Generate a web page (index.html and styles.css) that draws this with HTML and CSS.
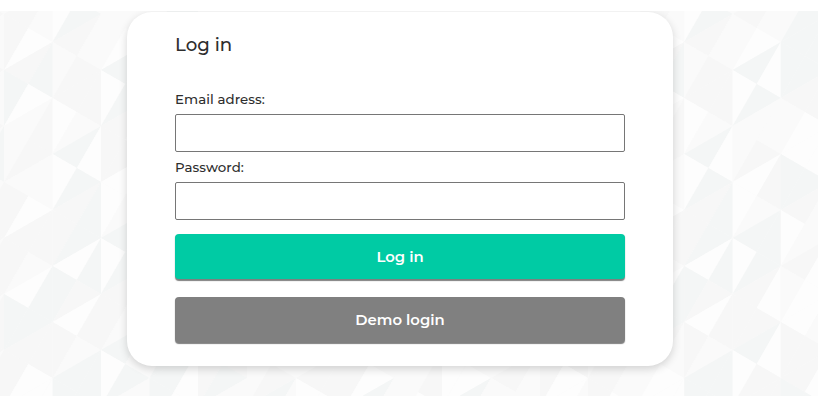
FILE: index.html
```html
<!DOCTYPE html>
<html lang="en">
<head>
<meta charset="utf-8">
<title>Log in</title>
<link rel="stylesheet" href="styles.css">
</head>
<body>
<main class="page">
  <svg class="pattern" id="pattern" width="818" height="385" viewBox="0 11 818 385" aria-hidden="true"></svg>
  <form class="card">
    <h3 class="title">Log in</h3>
    <label class="label" for="email">Email adress:</label>
    <input class="field" id="email" type="email">
    <label class="label" for="password">Password:</label>
    <input class="field" id="password" type="password">
    <button class="button primary" type="button">Log in</button>
    <button class="button demo" type="button">Demo login</button>
  </form>
</main>
<script src="pattern.js"></script>
</body>
</html>
```
FILE: styles.css
```css
* { box-sizing: border-box; }
body {
  margin: 0;
  background: #fff;
  color: #2e2e2e;
  font-family: Montserrat, Inter, sans-serif;
  font-weight: 500;
}
.page {
  position: relative;
  height: 385px;
  margin-top: 11px;
  padding: 1px 145px 0 127px;
  background: #fafafa;
  overflow: hidden;
}
.pattern { position: absolute; left: 0; top: 0; }
.card {
  position: relative;
  display: flex;
  flex-direction: column;
  width: 546px;
  height: 354px;
  padding: 20px 48px 0;
  border-radius: 25px;
  background: #fff;
  box-shadow: 0 3px 8px rgba(0, 0, 0, .16);
}
.card > * { flex-shrink: 0; }
.title {
  margin: 0 0 35px;
  font-size: 18.2px;
  font-weight: 500;
  line-height: 25px;
}
.label { font-size: 13.33px; line-height: 14px; letter-spacing: .07px; }
.field {
  height: 38px;
  margin: 8px 0;
  padding: 0 8px;
  border: 1px solid #767676;
  border-radius: 2px;
  background: #fff;
  font: inherit;
  outline: 0;
}
.button {
  height: 45px;
  margin: 0 0 18px;
  padding: 1px 0 0;
  border: 0;
  border-radius: 4px;
  color: #fff;
  font: 600 14.85px/44px Montserrat, Inter, sans-serif;
  padding-top: 2px;
  line-height: 43px;
  box-shadow: 0 1.5px 1px rgba(0, 0, 0, .5);
}
.primary { margin-top: 6px; background: #00cba4; }
.demo { background: #808080; }
```
FILE: pattern.js
```js
// Faceted backdrop: each column is a stack of rhombi cut into four triangles.
// Digits pick a shade for the upper, left, right and lower triangle.
const shades = ["#fdfdfd", "#fafafa", "#f7f7f7", "#f4f6f6"];
const P = "1013 2112 2021 3003 2233 0332 0221 3333";
const columns = [
  [-44.5, 1, "1112 1112 1112 1131 1122 1122 1122 1121"],
  [4, 0, "2210 2330 1122 1210 2221 0333 2220 0000"],
  [52.6, 1, P],
  [101, 0, "1110 3033 2212 0011 3033 2211 3013 1111"],
  [149.5, 1, "1133 2222 1111 1111 1111 1111 1113 3300"],
  [198, 0, "1111 1111 1111 1111 1111 1111 2223 1111"],
  [247, 0, "1111 1111 1111 1111 1111 1111 1112 3111"],
  [296, 1, "1111 1111 1111 1111 1111 1111 1111 2020"],
  [345, 0, "1111 1111 1111 1111 1111 1111 2210 3111"],
  [394, 1, "1111 1111 1111 1111 1111 1111 1111 1120"],
  [442, 0, "1111 1111 1111 1111 1111 1111 1010 3111"],
  [491, 1, "1111 1111 1111 1111 1111 1111 1111 2111"],
  [540, 0, "1111 1111 1111 1111 1111 1111 2220 0111"],
  [588, 1, "1111 1111 1111 1111 1111 1111 1112 2210"],
  [636, 0, "2210 2330 1122 1210 2221 0333 2110 0000"],
  [684.2, 1, P],
  [732.6, 0, "2110 3003 1112 0021 3033 2202 3002 2222"],
  [780.8, 1, "1133 3333 2120 0303 2011 2100 0212 2303"],
  [829, 0, ""]
];
let out = "";
for (let i = 0; i < columns.length - 1; i++) {
  const [x, odd, data] = columns[i];
  const r = columns[i + 1][0];
  const m = (x + r) / 2;
  data.split(" ").forEach((cell, j) => {
    const a = (odd ? -14 : 14) + 56 * j;
    const top = `${x},${a}`, bottom = `${x},${a + 56}`, mid = `${m},${a + 14}`;
    const rt = `${r},${a - 28}`, rb = `${r},${a + 28}`;
    [[top, mid, rt], [top, bottom, mid], [mid, rt, rb], [bottom, mid, rb]].forEach((p, k) => {
      out += `<polygon points="${p.join(" ")}" fill="${shades[cell[k]]}"/>`;
    });
  });
}
document.getElementById("pattern").innerHTML = out;
```
